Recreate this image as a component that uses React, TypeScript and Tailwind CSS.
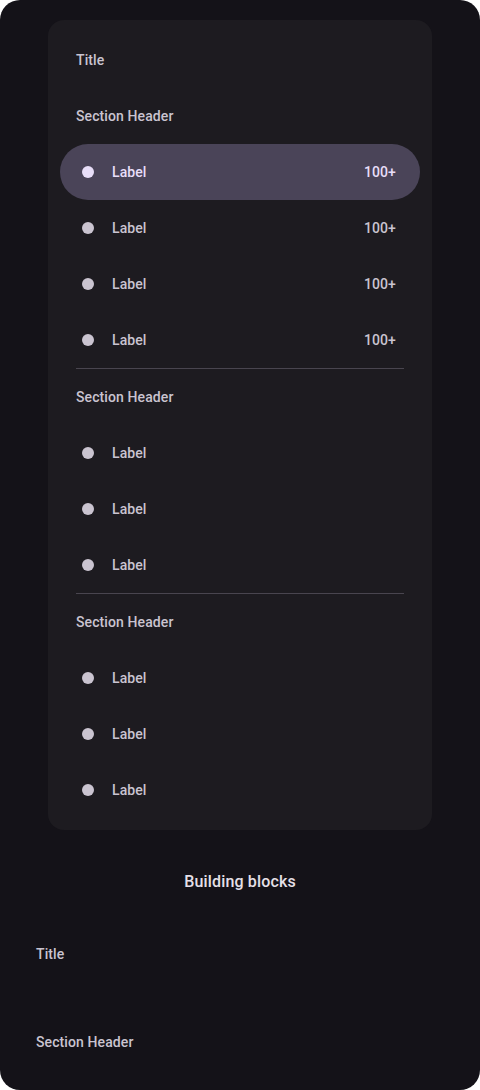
const sections = [
  { labels: ["Label", "Label", "Label", "Label"], badge: true },
  { labels: ["Label", "Label", "Label"], badge: false },
  { labels: ["Label", "Label", "Label"], badge: false },
];

function Item({ active, badge }: { active?: boolean; badge?: boolean }) {
  return (
    <div
      className={
        active
          ? "flex h-14 items-center rounded-full bg-[#4A4458] pl-[22px] pr-6 text-[#E8DEF8]"
          : "flex h-14 items-center rounded-full pl-[22px] pr-6 text-[#CAC4D0]"
      }
    >
      <span
        className={
          active
            ? "h-3 w-3 shrink-0 rounded-full bg-[#E8DEF8]"
            : "h-3 w-3 shrink-0 rounded-full bg-[#CAC4D0]"
        }
      />
      <span className="ml-[18px] flex-1 text-sm font-medium tracking-[0.1px]">Label</span>
      {badge && <span className="text-sm font-medium tracking-[0.1px]">100+</span>}
    </div>
  );
}

function Header({ children }: { children: string }) {
  return (
    <div className="flex h-14 items-center px-4 text-sm font-medium tracking-[0.1px] text-[#CAC4D0]">
      {children}
    </div>
  );
}

export default function App() {
  return (
    <div className="min-h-screen bg-white" style={{ fontFamily: "Roboto, 'Noto Sans', sans-serif" }}>
      <div className="flex h-[1090px] w-[480px] flex-col items-center overflow-hidden rounded-[20px] bg-[#141218] pt-5">
        <nav className="w-[384px] rounded-2xl bg-[#1D1B20] p-3">
          <Header>Title</Header>
          {sections.map((s, i) => (
            <div key={i}>
              {i > 0 && <div className="mx-4 h-px bg-[#49454F]" />}
              <Header>Section Header</Header>
              {s.labels.map((_, j) => (
                <Item key={j} active={i === 0 && j === 0} badge={s.badge} />
              ))}
            </div>
          ))}
        </nav>

        <h2 className="mt-[41px] text-base font-medium leading-[22px] tracking-[0.15px] text-[#E6E0E9]">
          Building blocks
        </h2>

        <div className="mt-[33px] w-full px-5">
          <Header>Title</Header>
          <div className="h-8" />
          <Header>Section Header</Header>
        </div>
      </div>
    </div>
  );
}
